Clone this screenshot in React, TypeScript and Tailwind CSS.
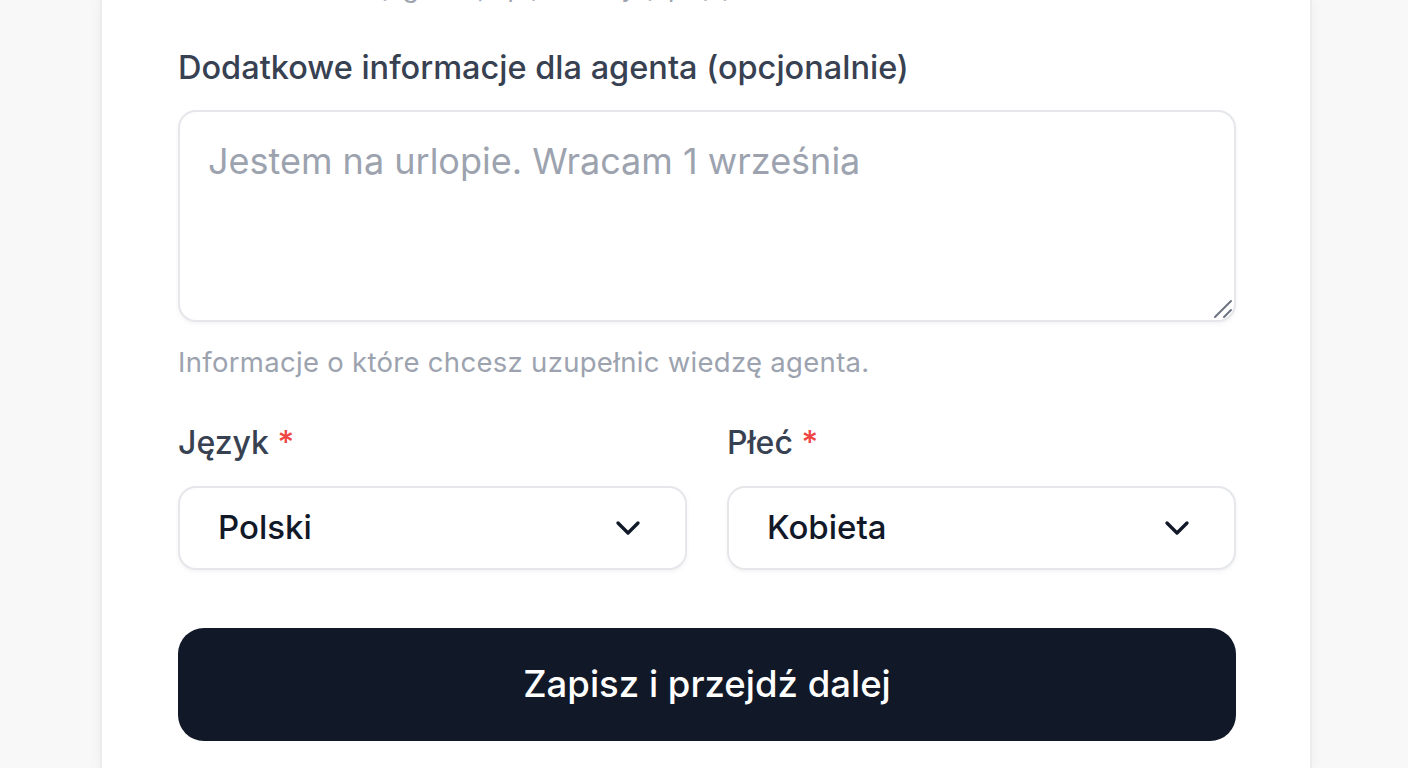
import React from "react";
import { ChevronDown } from "lucide-react";

function SelectBox({ value }: { value: string }) {
  return (
    <button
      type="button"
      className="flex h-[84px] w-full items-center justify-between rounded-[18px] border-2 border-[#e5e7eb] bg-white pl-[38px] pr-[37px] shadow-[0_2px_4px_rgba(0,0,0,0.05)]"
    >
      <span className="text-[33px] font-medium text-[#111827]">{value}</span>
      <ChevronDown size={40} strokeWidth={2} className="text-[#111827]" />
    </button>
  );
}

export default function App() {
  return (
    <div
      className="h-screen overflow-hidden bg-[#f8f8f8]"
      style={{ fontFamily: "Inter, 'Noto Sans', sans-serif" }}
    >
      <div className="ml-[100px] flex h-[768px] w-[1212px] flex-col border-x-2 border-[#ececec] bg-white pl-[76px] pr-[74px] shadow-[0_0_12px_rgba(0,0,0,0.05)]">
        <p className="-mt-[30px] pl-[200px] text-[26px] leading-[36px] text-[#9ca3af]">
          (ogólnie, np.) zasady (np. (x)
        </p>

        <label className="mt-[40px] block text-[32.5px] font-medium leading-[44px] text-[#374151]">
          Dodatkowe informacje dla agenta (opcjonalnie)
        </label>
        <div className="relative mt-[20px]">
          <textarea
            rows={3}
            placeholder="Jestem na urlopie. Wracam 1 września"
            className="block h-[212px] w-full resize-none rounded-[18px] border-2 border-[#e5e7eb] bg-white px-[28px] py-[25px] text-[36px] leading-[48px] text-[#111827] shadow-[0_2px_4px_rgba(0,0,0,0.05)] outline-none placeholder:text-[#9ca3af]"
          />
          <svg
            width="20"
            height="20"
            viewBox="0 0 20 20"
            className="pointer-events-none absolute bottom-[3px] right-[3px]"
          >
            <line x1="2" y1="18" x2="18" y2="2" stroke="#6b7280" strokeWidth="2" strokeLinecap="round" />
            <line x1="11" y1="18" x2="18" y2="11" stroke="#6b7280" strokeWidth="2" strokeLinecap="round" />
          </svg>
        </div>
        <p className="mt-[20px] text-[27.5px] leading-[40px] tracking-[0.3px] text-[#9ca3af]">
          Informacje o które chcesz uzupełnic wiedzę agenta.
        </p>

        <div className="mt-[39px] grid grid-cols-2 gap-x-[40px]">
          <div>
            <label className="block text-[32px] font-medium leading-[44px] text-[#374151]">
              Język <span className="text-[#ef4444]">*</span>
            </label>
            <div className="mt-[21px]">
              <SelectBox value="Polski" />
            </div>
          </div>
          <div>
            <label className="block text-[32px] font-medium leading-[44px] text-[#374151]">
              Płeć <span className="text-[#ef4444]">*</span>
            </label>
            <div className="mt-[21px]">
              <SelectBox value="Kobieta" />
            </div>
          </div>
        </div>

        <button
          type="button"
          className="mt-[58px] flex h-[113px] w-full shrink-0 items-center justify-center rounded-[26px] bg-[#111827] text-[36.5px] font-medium text-white"
        >
          Zapisz i przejdź dalej
        </button>
      </div>
    </div>
  );
}
